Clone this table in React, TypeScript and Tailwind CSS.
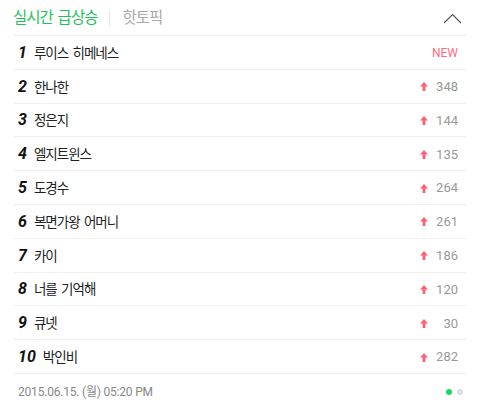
const ranks = [
  { name: "루이스 히메네스", change: "NEW" },
  { name: "한나한", change: "348" },
  { name: "정은지", change: "144" },
  { name: "엘지트윈스", change: "135" },
  { name: "도경수", change: "264" },
  { name: "복면가왕 어머니", change: "261" },
  { name: "카이", change: "186" },
  { name: "너를 기억해", change: "120" },
  { name: "큐넷", change: "30" },
  { name: "박인비", change: "282" },
];

const font = { fontFamily: '"Roboto", "Noto Sans CJK KR", sans-serif' };

function UpArrow() {
  return (
    <svg width="8" height="9" viewBox="0 0 8 9">
      <path d="M4 0 L8 4.5 L5.4 4.5 L5.4 9 L2.6 9 L2.6 4.5 L0 4.5 Z" fill="#ff5f73" />
    </svg>
  );
}

export default function App() {
  return (
    <div className="h-[404px] w-[480px] bg-white" style={font}>
      <div className="mx-[13px]">
        <div className="box-border flex h-[36px] items-center border-b border-[#f0f0f0] pt-[2px]">
          <span className="text-[15.5px] tracking-[-1px] [word-spacing:2px] text-[#1fc25a]">실시간 급상승</span>
          <span className="mx-[12px] h-[14px] w-px bg-[#e6e6e6]" />
          <span className="text-[15.5px] tracking-[-1px] text-[#aaaaaa]">핫토픽</span>
          <svg className="ml-auto mr-[5px]" width="19" height="11" viewBox="0 0 19 11" fill="none">
            <path d="M1 10 L9.5 1.5 L18 10" stroke="#555" strokeWidth="1.2" />
          </svg>
        </div>

        {ranks.map((item, i) => (
          <div
            key={item.name}
            className="box-border flex h-[33.8px] items-center border-b border-[#f0f0f0] pt-[1px] pl-[5px] pr-[9px]"
          >
            <span className="text-[16px] font-bold italic text-[#111]">{i + 1}</span>
            <span className="ml-[7px] text-[13.5px] tracking-[-1px] [word-spacing:2px] text-[#222]">
              {item.name}
            </span>
            {item.change === "NEW" ? (
              <span className="ml-auto text-[12px] text-[#ff6b7c]">NEW</span>
            ) : (
              <span className="ml-auto flex items-center">
                <UpArrow />
                <span className="w-[30px] text-right text-[13px] text-[#999]">{item.change}</span>
              </span>
            )}
          </div>
        ))}

        <div className="flex h-[34px] items-center pt-[2px] pl-[5px] pr-[4px]">
          <span className="text-[12px] tracking-[-0.2px] text-[#888]">2015.06.15. (월) 05:20 PM</span>
          <span className="ml-auto h-[6px] w-[6px] rounded-full bg-[#1ed260]" />
          <span className="ml-[5px] h-[6px] w-[6px] rounded-full bg-[#dddddd]" />
        </div>
      </div>
    </div>
  );
}
